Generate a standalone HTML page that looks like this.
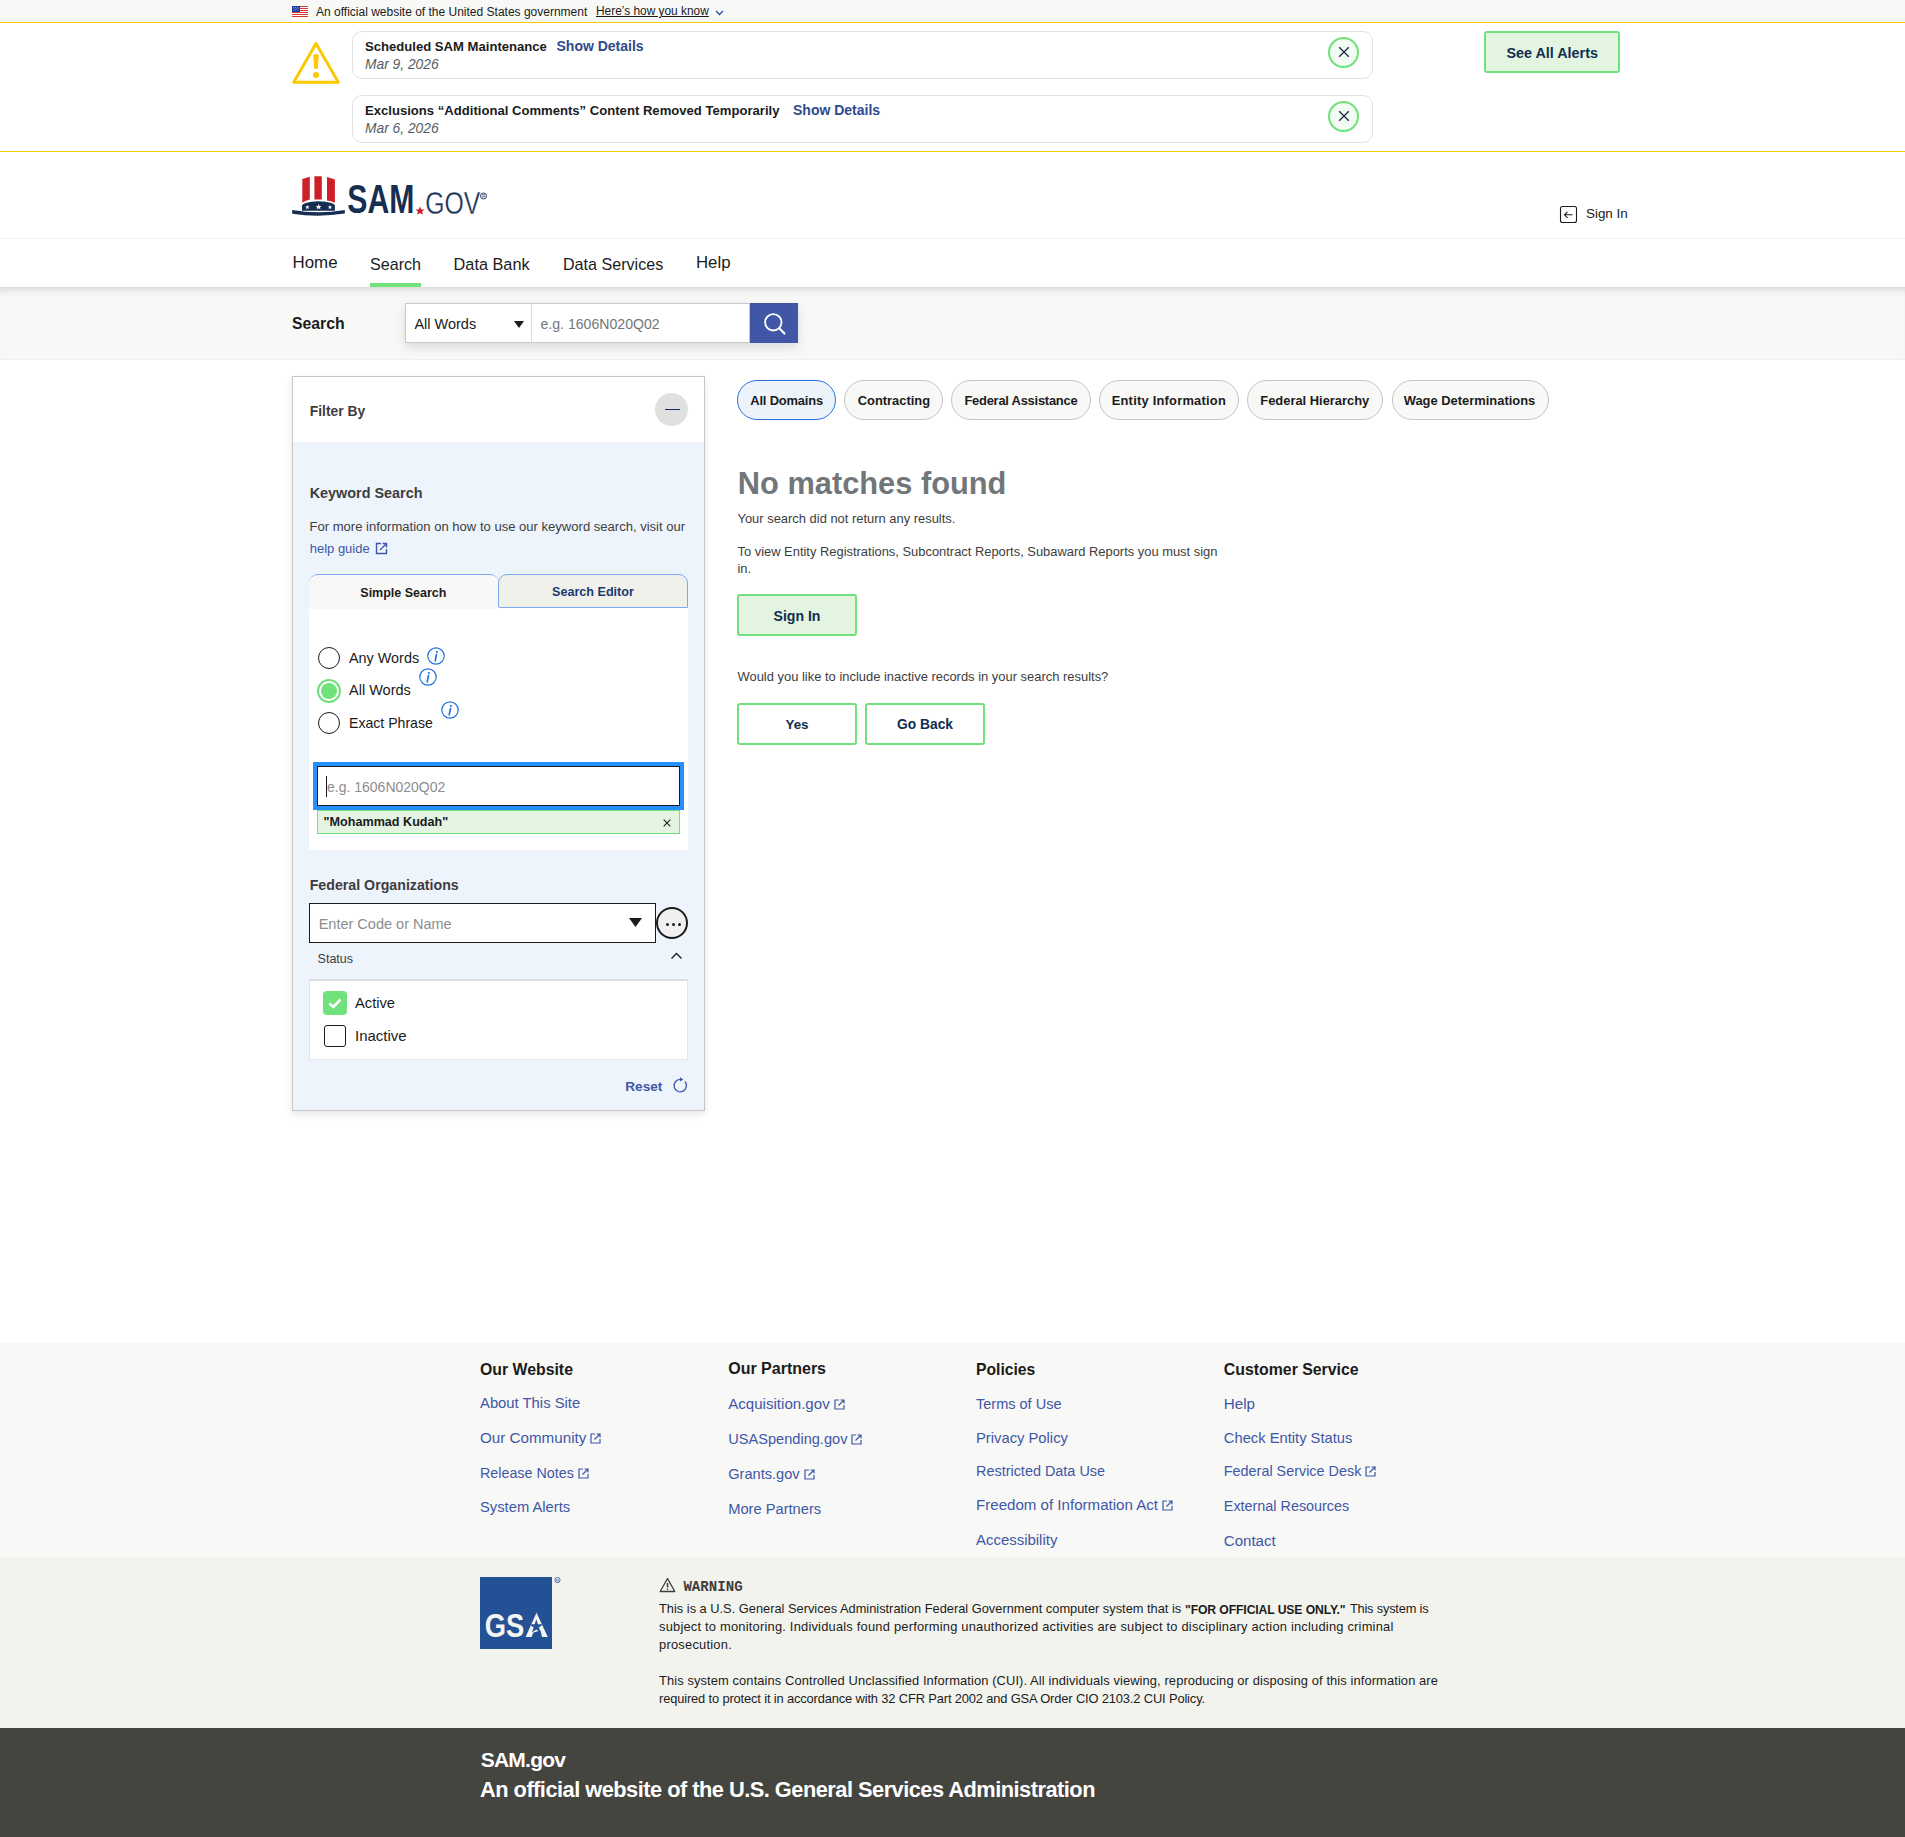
<!DOCTYPE html>
<html><head><meta charset="utf-8"><title>SAM.gov Search</title>
<style>
html,body{margin:0;padding:0;}
body{width:1905px;height:1837px;position:relative;overflow:hidden;background:#fff;font-family:'Liberation Sans', sans-serif;}
.t{position:absolute;white-space:nowrap;line-height:1;}
</style></head><body>
<div style="position:absolute;left:0px;top:0px;width:1905px;height:22px;background:#f8f8f6;"></div>
<div style="position:absolute;left:0px;top:22px;width:1905px;height:1px;background:#fcc900;"></div>
<svg style="position:absolute;left:292px;top:6px" width="16" height="11" viewBox="0 0 16 11">
<rect width="16" height="11" fill="#fff"/>
<g fill="#d83933"><rect y="0" width="16" height="1"/><rect y="2" width="16" height="1"/><rect y="4" width="16" height="1"/><rect y="6" width="16" height="1"/><rect y="8" width="16" height="1"/><rect y="10" width="16" height="1"/></g>
<rect width="8" height="6" fill="#1b3a9e"/>
<g fill="#fff"><circle cx="1.5" cy="1.2" r=".45"/><circle cx="3.5" cy="1.2" r=".45"/><circle cx="5.5" cy="1.2" r=".45"/><circle cx="2.5" cy="2.6" r=".45"/><circle cx="4.5" cy="2.6" r=".45"/><circle cx="6.5" cy="2.6" r=".45"/><circle cx="1.5" cy="4" r=".45"/><circle cx="3.5" cy="4" r=".45"/><circle cx="5.5" cy="4" r=".45"/></g>
</svg>
<div class="t " style="left:316px;top:6.34px;font-size:12.0px;font-weight:400;color:#1b1b1b;font-family:'Liberation Sans', sans-serif;">An official website of the United States government</div>
<div class="t " style="left:596px;top:6.43px;font-size:11.9px;font-weight:400;color:#1b1b1b;font-family:'Liberation Sans', sans-serif;text-decoration:underline;">Here’s how you know</div>
<svg style="position:absolute;left:714.5px;top:9.5px" width="9" height="6" viewBox="0 0 9 6"><path d="M1 1l3.5 3.5L8 1" fill="none" stroke="#2e4a9e" stroke-width="1.3"/></svg>
<div style="position:absolute;left:0px;top:151px;width:1905px;height:1px;background:#fcc900;"></div>
<svg style="position:absolute;left:292px;top:41px" width="48" height="46" viewBox="0 0 48 46">
<path d="M24 2.6 L46.3 41.3 L1.7 41.3 Z" fill="none" stroke="#fcc900" stroke-width="3" stroke-linejoin="round"/>
<path d="M21.2 14.3 Q24 11.6 26.8 14.3 L25.8 27.8 L22.2 27.8 Z" fill="#fcc900"/>
<circle cx="24" cy="33.9" r="3" fill="#fcc900"/>
</svg>
<div style="position:absolute;left:352px;top:31px;width:1021px;height:48px;box-sizing:border-box;border:1px solid #dfe1e2;border-radius:10px;background:#fff;"></div>
<div class="t " style="left:365px;top:39.91px;font-size:13.1px;font-weight:700;color:#1b1b1b;font-family:'Liberation Sans', sans-serif;">Scheduled SAM Maintenance</div>
<div class="t " style="left:556.5px;top:39.15px;font-size:14.0px;font-weight:700;color:#2e4a8c;font-family:'Liberation Sans', sans-serif;">Show Details</div>
<div class="t " style="left:365px;top:58.02px;font-size:13.8px;font-weight:400;color:#565c65;font-family:'Liberation Sans', sans-serif;font-style:italic;">Mar 9, 2026</div>
<div style="position:absolute;left:1328px;top:36.8px;width:31px;height:31px;box-sizing:border-box;border:2px solid #70e17b;border-radius:50%;background:#f3fbf2;"></div>
<svg style="position:absolute;left:1336.5px;top:44.8px" width="14" height="14" viewBox="0 0 14 14"><path d="M2.2 2.2L11.8 11.8M11.8 2.2L2.2 11.8" stroke="#1b2b4b" stroke-width="1.3"/></svg>
<div style="position:absolute;left:352px;top:95px;width:1021px;height:48px;box-sizing:border-box;border:1px solid #dfe1e2;border-radius:10px;background:#fff;"></div>
<div class="t " style="left:365px;top:103.91px;font-size:13.1px;font-weight:700;color:#1b1b1b;font-family:'Liberation Sans', sans-serif;">Exclusions “Additional Comments” Content Removed Temporarily</div>
<div class="t " style="left:793px;top:103.15px;font-size:14.0px;font-weight:700;color:#2e4a8c;font-family:'Liberation Sans', sans-serif;">Show Details</div>
<div class="t " style="left:365px;top:122.02px;font-size:13.8px;font-weight:400;color:#565c65;font-family:'Liberation Sans', sans-serif;font-style:italic;">Mar 6, 2026</div>
<div style="position:absolute;left:1328px;top:100.8px;width:31px;height:31px;box-sizing:border-box;border:2px solid #70e17b;border-radius:50%;background:#f3fbf2;"></div>
<svg style="position:absolute;left:1336.5px;top:108.8px" width="14" height="14" viewBox="0 0 14 14"><path d="M2.2 2.2L11.8 11.8M11.8 2.2L2.2 11.8" stroke="#1b2b4b" stroke-width="1.3"/></svg>
<div style="position:absolute;left:1484px;top:31px;width:136px;height:42px;box-sizing:border-box;border:2px solid #70e17b;border-radius:3px;background:#e3f5e1;"></div>
<div class="t " style="left:1506.5px;top:46.35px;font-size:14.35px;font-weight:700;color:#112e51;font-family:'Liberation Sans', sans-serif;">See All Alerts</div>
<svg style="position:absolute;left:291px;top:175px" width="197" height="43" viewBox="0 0 197 43">
<path d="M11.3 4.1 L18.8 1.8 L18.8 24.6 Q15 25.6 11.3 27.7 Z" fill="#cd2026"/>
<path d="M23.4 1.2 L30.8 1.2 L30.8 24.6 Q27.1 24.2 23.4 24.6 Z" fill="#cd2026"/>
<path d="M36 2 L43.9 4.4 L43.9 27.7 Q40 25.6 36 25.4 Z" fill="#cd2026"/>
<path d="M11 35.7 L11 30.6 Q12 27.2 27.4 26.3 Q42.9 27.2 43.9 30.6 L43.9 35.7 Z" fill="#162e51"/>
<path d="M1.2 35 Q27.4 39.6 53.8 35 L53.8 38.6 Q27.4 42.6 1.2 38.8 Z" fill="#162e51"/>
<g fill="#fff">
<polygon points="16.4,29.9 17,31.4 18.6,31.5 17.4,32.5 17.8,34.1 16.4,33.2 15,34.1 15.4,32.5 14.2,31.5 15.8,31.4"/>
<polygon points="27.6,29.1 28.4,31 30.4,31.1 28.9,32.4 29.4,34.3 27.6,33.2 25.8,34.3 26.3,32.4 24.8,31.1 26.8,31"/>
<polygon points="39,29.9 39.6,31.4 41.2,31.5 40,32.5 40.4,34.1 39,33.2 37.6,34.1 38,32.5 36.8,31.5 38.4,31.4"/>
</g>
<text x="56.3" y="38" font-family="Liberation Sans" font-weight="700" font-size="40" fill="#162e51" textLength="67" lengthAdjust="spacingAndGlyphs">SAM</text>
<polygon points="129,31.4 130.3,34.4 133.6,34.6 131.1,36.6 131.9,39.8 129,38 126.1,39.8 126.9,36.6 124.4,34.6 127.7,34.4" fill="#cd2026"/>
<text x="134.2" y="38.6" font-family="Liberation Sans" font-weight="400" font-size="32" fill="#162e51" stroke="#fff" stroke-width="0.35" paint-order="normal" textLength="55" lengthAdjust="spacingAndGlyphs">GOV</text>
<circle cx="192.5" cy="21" r="3" fill="none" stroke="#162e51" stroke-width="0.9"/>
<text x="191" y="22.8" font-family="Liberation Sans" font-size="4.5" fill="#162e51">R</text>
</svg>
<svg style="position:absolute;left:1559px;top:205px" width="19" height="19" viewBox="0 0 19 19">
<rect x="1.5" y="1.5" width="16" height="16" rx="2" fill="none" stroke="#1b1b1b" stroke-width="1.1"/>
<path d="M13.5 9.8H5.5M8.5 6.8L5.5 9.8L8.5 12.8" fill="none" stroke="#1b1b1b" stroke-width="1.1"/>
</svg>
<div class="t " style="left:1586px;top:206.66px;font-size:13.4px;font-weight:400;color:#1b1b1b;font-family:'Liberation Sans', sans-serif;">Sign In</div>
<div style="position:absolute;left:0px;top:238px;width:1905px;height:1px;background:#f0f0ec;"></div>
<div class="t " style="left:292.5px;top:255.19px;font-size:16.9px;font-weight:400;color:#1b1b1b;font-family:'Liberation Sans', sans-serif;">Home</div>
<div class="t " style="left:370px;top:255.87px;font-size:16.1px;font-weight:400;color:#1b1b1b;font-family:'Liberation Sans', sans-serif;">Search</div>
<div class="t " style="left:453.6px;top:255.70px;font-size:16.3px;font-weight:400;color:#1b1b1b;font-family:'Liberation Sans', sans-serif;">Data Bank</div>
<div class="t " style="left:563px;top:255.87px;font-size:16.1px;font-weight:400;color:#1b1b1b;font-family:'Liberation Sans', sans-serif;">Data Services</div>
<div class="t " style="left:696px;top:255.28px;font-size:16.8px;font-weight:400;color:#1b1b1b;font-family:'Liberation Sans', sans-serif;">Help</div>
<div style="position:absolute;left:370px;top:283px;width:51px;height:4px;background:#70e17b;"></div>
<div style="position:absolute;left:0px;top:287px;width:1905px;height:73px;box-sizing:border-box;border-bottom:1px solid #f0f0ee;background:#f8f8f6;box-shadow: inset 0 8px 8px -6px rgba(0,0,0,0.16);"></div>
<div class="t " style="left:292px;top:315.63px;font-size:15.8px;font-weight:700;color:#1b1b1b;font-family:'Liberation Sans', sans-serif;">Search</div>
<div style="position:absolute;left:405px;top:303px;width:393px;height:40px;box-shadow:0 4px 10px rgba(0,0,0,0.12);"></div>
<div style="position:absolute;left:405px;top:303px;width:127px;height:40px;box-sizing:border-box;border:1px solid #c9c9c9;background:#fff;"></div>
<div class="t " style="left:414.4px;top:316.73px;font-size:14.5px;font-weight:400;color:#1b1b1b;font-family:'Liberation Sans', sans-serif;">All Words</div>
<svg style="position:absolute;left:514px;top:321px" width="10" height="7" viewBox="0 0 10 7"><path d="M0 0H10L5 7Z" fill="#1b1b1b"/></svg>
<div style="position:absolute;left:531px;top:303px;width:219px;height:40px;box-sizing:border-box;border:1px solid #c9c9c9;border-left:1px solid #dcdcdc;background:#fff;"></div>
<div class="t " style="left:540.5px;top:317.06px;font-size:14.1px;font-weight:400;color:#71767a;font-family:'Liberation Sans', sans-serif;">e.g. 1606N020Q02</div>
<div style="position:absolute;left:750px;top:303px;width:48px;height:40px;background:#3f57a6;"></div>
<svg style="position:absolute;left:762.7px;top:311.7px" width="24" height="24" viewBox="0 0 24 24"><circle cx="10.3" cy="10.3" r="8.2" fill="none" stroke="#fff" stroke-width="1.8"/><path d="M16.2 16.2L21.5 21.5" stroke="#fff" stroke-width="2.2" stroke-linecap="round"/></svg>
<div style="position:absolute;left:292px;top:376px;width:413px;height:735px;box-sizing:border-box;border:1px solid #c6c6c6;background:#edf4fc;box-shadow:0 3px 8px rgba(0,0,0,0.10);"></div>
<div style="position:absolute;left:293px;top:377px;width:411px;height:65px;background:#fff;"></div>
<div class="t " style="left:309.8px;top:405.28px;font-size:13.85px;font-weight:700;color:#3d3d3d;font-family:'Liberation Sans', sans-serif;">Filter By</div>
<div style="position:absolute;left:655px;top:393px;width:33px;height:33px;border-radius:50%;background:#e0e0e0;"></div>
<div style="position:absolute;left:665px;top:408.8px;width:14.5px;height:1.6px;background:#112e51;border-radius:1px;"></div>
<div class="t " style="left:309.7px;top:485.51px;font-size:14.4px;font-weight:700;color:#3d3d3d;font-family:'Liberation Sans', sans-serif;">Keyword Search</div>
<div class="t " style="left:309.5px;top:519.55px;font-size:13.05px;font-weight:400;color:#3d3d3d;font-family:'Liberation Sans', sans-serif;">For more information on how to use our keyword search, visit our</div>
<div class="t " style="left:309.7px;top:542.00px;font-size:13.0px;font-weight:400;color:#3f57a6;font-family:'Liberation Sans', sans-serif;">help guide</div>
<svg style="position:absolute;left:375px;top:542px" width="13" height="13" viewBox="0 0 13 13"><path d="M6 1.5H1.5V11.5H11.5V7" fill="none" stroke="#3f57a6" stroke-width="1.4"/><path d="M5 8L11.5 1.5M7.5 1.5H11.5V5.5" fill="none" stroke="#3f57a6" stroke-width="1.4"/></svg>
<div style="position:absolute;left:309px;top:574px;width:190px;height:34px;box-sizing:border-box;border-top:1px solid #7aaaf0;border-radius:9px 9px 0 0;background:#f8f8f6;"></div>
<div style="position:absolute;left:498px;top:574px;width:190px;height:34px;box-sizing:border-box;border:1px solid #7aaaf0;border-radius:9px 9px 0 0;background:#f1f1ec;"></div>
<div class="t " style="left:360.3px;top:587.22px;font-size:12.5px;font-weight:700;color:#1b1b1b;font-family:'Liberation Sans', sans-serif;">Simple Search</div>
<div class="t " style="left:552px;top:586.33px;font-size:12.6px;font-weight:700;color:#1a3a70;font-family:'Liberation Sans', sans-serif;">Search Editor</div>
<div style="position:absolute;left:309px;top:608px;width:379px;height:242px;background:#fff;"></div>
<div style="position:absolute;left:309px;top:607px;width:190px;height:2px;background:#f8f8f6;"></div>
<div style="position:absolute;left:318px;top:647px;width:22px;height:22px;box-sizing:border-box;border:1.3px solid #1b1b1b;border-radius:50%;"></div>
<div style="position:absolute;left:317px;top:679px;width:24px;height:24px;box-sizing:border-box;border:2px solid #70e17b;border-radius:50%;"></div>
<div style="position:absolute;left:321px;top:683px;width:16px;height:16px;border-radius:50%;background:#70e17b;"></div>
<div style="position:absolute;left:318px;top:712px;width:22px;height:22px;box-sizing:border-box;border:1.3px solid #1b1b1b;border-radius:50%;"></div>
<div class="t " style="left:349px;top:650.51px;font-size:14.4px;font-weight:400;color:#1b1b1b;font-family:'Liberation Sans', sans-serif;">Any Words</div>
<div class="t " style="left:349px;top:683.23px;font-size:14.5px;font-weight:400;color:#1b1b1b;font-family:'Liberation Sans', sans-serif;">All Words</div>
<div class="t " style="left:349px;top:716.46px;font-size:14.1px;font-weight:400;color:#1b1b1b;font-family:'Liberation Sans', sans-serif;">Exact Phrase</div>
<svg style="position:absolute;left:427px;top:646.8px" width="18" height="18" viewBox="0 0 18 18"><circle cx="9" cy="9" r="8.2" fill="none" stroke="#2672de" stroke-width="1.2"/><circle cx="9.9" cy="5" r="1.1" fill="#2672de"/><path d="M9.5 7.5L8.2 13.8" stroke="#2672de" stroke-width="1.7" stroke-linecap="round"/></svg>
<svg style="position:absolute;left:418.8px;top:667.8px" width="18" height="18" viewBox="0 0 18 18"><circle cx="9" cy="9" r="8.2" fill="none" stroke="#2672de" stroke-width="1.2"/><circle cx="9.9" cy="5" r="1.1" fill="#2672de"/><path d="M9.5 7.5L8.2 13.8" stroke="#2672de" stroke-width="1.7" stroke-linecap="round"/></svg>
<svg style="position:absolute;left:440.8px;top:700.8px" width="18" height="18" viewBox="0 0 18 18"><circle cx="9" cy="9" r="8.2" fill="none" stroke="#2672de" stroke-width="1.2"/><circle cx="9.9" cy="5" r="1.1" fill="#2672de"/><path d="M9.5 7.5L8.2 13.8" stroke="#2672de" stroke-width="1.7" stroke-linecap="round"/></svg>
<div style="position:absolute;left:313px;top:762px;width:371px;height:48px;background:#2491ff;"></div>
<div style="position:absolute;left:317px;top:766px;width:363px;height:40px;box-sizing:border-box;border:1.5px solid #1b1b1b;background:#fff;"></div>
<div style="position:absolute;left:326px;top:776px;width:1px;height:21px;background:#1b1b1b;"></div>
<div class="t " style="left:327px;top:780.15px;font-size:14.0px;font-weight:400;color:#8d8d8d;font-family:'Liberation Sans', sans-serif;">e.g. 1606N020Q02</div>
<div style="position:absolute;left:317px;top:810px;width:363px;height:24px;box-sizing:border-box;border:1px solid #70e17b;background:#e3f5e1;"></div>
<div class="t " style="left:323.6px;top:815.93px;font-size:12.6px;font-weight:700;color:#1b1b1b;font-family:'Liberation Sans', sans-serif;">"Mohammad Kudah"</div>
<svg style="position:absolute;left:662px;top:818px" width="10" height="10" viewBox="0 0 10 10"><path d="M1.7 1.7L8.3 8.3M8.3 1.7L1.7 8.3" stroke="#1b1b1b" stroke-width="1.1"/></svg>
<div class="t " style="left:309.7px;top:877.98px;font-size:14.2px;font-weight:700;color:#3d3d3d;font-family:'Liberation Sans', sans-serif;">Federal Organizations</div>
<div style="position:absolute;left:309px;top:903px;width:347px;height:40px;box-sizing:border-box;border:1.5px solid #1b1b1b;background:#fff;"></div>
<div class="t " style="left:318.7px;top:916.73px;font-size:14.5px;font-weight:400;color:#8d8d8d;font-family:'Liberation Sans', sans-serif;">Enter Code or Name</div>
<svg style="position:absolute;left:629px;top:918px" width="13" height="9" viewBox="0 0 13 9"><path d="M0 0H13L6.5 9Z" fill="#1b1b1b"/></svg>
<div style="position:absolute;left:656px;top:907px;width:32px;height:32px;box-sizing:border-box;border:2px solid #1b1b1b;border-radius:50%;background:#f0f0f0;"></div>
<div style="position:absolute;left:665.6px;top:922.6px;width:3.2px;height:3.2px;border-radius:50%;background:#1b1b1b;"></div>
<div style="position:absolute;left:671.6px;top:922.6px;width:3.2px;height:3.2px;border-radius:50%;background:#1b1b1b;"></div>
<div style="position:absolute;left:677.6px;top:922.6px;width:3.2px;height:3.2px;border-radius:50%;background:#1b1b1b;"></div>
<div class="t " style="left:317.6px;top:953.12px;font-size:12.5px;font-weight:400;color:#3d3d3d;font-family:'Liberation Sans', sans-serif;">Status</div>
<svg style="position:absolute;left:670px;top:951px" width="13" height="9" viewBox="0 0 13 9"><path d="M1.5 7.5L6.5 2.5L11.5 7.5" fill="none" stroke="#1b1b1b" stroke-width="1.3"/></svg>
<div style="position:absolute;left:309px;top:979px;width:379px;height:81px;box-sizing:border-box;border:1px solid #e3e5e6;border-top:2px solid #dcdee0;background:#fff;"></div>
<div style="position:absolute;left:323px;top:991px;width:24px;height:24px;border-radius:4px;background:#70e17b;"></div>
<svg style="position:absolute;left:323px;top:991px" width="24" height="24" viewBox="0 0 24 24"><path d="M6.5 12.5L10.3 16L17.5 8.5" fill="none" stroke="#fff" stroke-width="2.6"/></svg>
<div style="position:absolute;left:324px;top:1025px;width:22px;height:22px;box-sizing:border-box;border:1.5px solid #1b1b1b;border-radius:3px;background:#fff;"></div>
<div class="t " style="left:355px;top:995.96px;font-size:14.7px;font-weight:400;color:#1b1b1b;font-family:'Liberation Sans', sans-serif;">Active</div>
<div class="t " style="left:355px;top:1027.70px;font-size:15.0px;font-weight:400;color:#1b1b1b;font-family:'Liberation Sans', sans-serif;">Inactive</div>
<div class="t " style="left:625.3px;top:1079.69px;font-size:13.6px;font-weight:700;color:#3f57a6;font-family:'Liberation Sans', sans-serif;">Reset</div>
<svg style="position:absolute;left:671.5px;top:1076.5px" width="17" height="17" viewBox="0 0 17 17"><path d="M8.3 2.4A6.2 6.2 0 1 0 12.9 4.5" fill="none" stroke="#3f57a6" stroke-width="1.3"/><path d="M8 0.2L11.3 2.4L8 4.6Z" fill="#3f57a6"/></svg>
<div style="position:absolute;left:737px;top:380px;width:99px;height:40px;box-sizing:border-box;border-radius:20px;border:1px solid #2672de;background:#edf3fb;"></div>
<div class="t " style="left:750.3px;top:394.58px;font-size:12.9px;font-weight:700;color:#1b1b1b;font-family:'Liberation Sans', sans-serif;letter-spacing:-0.168px;">All Domains</div>
<div style="position:absolute;left:844px;top:380px;width:99px;height:40px;box-sizing:border-box;border-radius:20px;border:1px solid #c6c6c6;background:#f8f8f6;"></div>
<div class="t " style="left:857.7px;top:394.58px;font-size:12.9px;font-weight:700;color:#1b1b1b;font-family:'Liberation Sans', sans-serif;letter-spacing:0.011px;">Contracting</div>
<div style="position:absolute;left:951px;top:380px;width:139.5px;height:40px;box-sizing:border-box;border-radius:20px;border:1px solid #c6c6c6;background:#f8f8f6;"></div>
<div class="t " style="left:964.4px;top:394.58px;font-size:12.9px;font-weight:700;color:#1b1b1b;font-family:'Liberation Sans', sans-serif;letter-spacing:-0.223px;">Federal Assistance</div>
<div style="position:absolute;left:1099px;top:380px;width:139.5px;height:40px;box-sizing:border-box;border-radius:20px;border:1px solid #c6c6c6;background:#f8f8f6;"></div>
<div class="t " style="left:1111.7px;top:394.58px;font-size:12.9px;font-weight:700;color:#1b1b1b;font-family:'Liberation Sans', sans-serif;letter-spacing:0.225px;">Entity Information</div>
<div style="position:absolute;left:1247px;top:380px;width:135.5px;height:40px;box-sizing:border-box;border-radius:20px;border:1px solid #c6c6c6;background:#f8f8f6;"></div>
<div class="t " style="left:1260.3px;top:394.58px;font-size:12.9px;font-weight:700;color:#1b1b1b;font-family:'Liberation Sans', sans-serif;letter-spacing:0.001px;">Federal Hierarchy</div>
<div style="position:absolute;left:1391.5px;top:380px;width:157.0px;height:40px;box-sizing:border-box;border-radius:20px;border:1px solid #c6c6c6;background:#f8f8f6;"></div>
<div class="t " style="left:1403.7px;top:394.58px;font-size:12.9px;font-weight:700;color:#1b1b1b;font-family:'Liberation Sans', sans-serif;letter-spacing:0.015px;">Wage Determinations</div>
<div class="t " style="left:737.8px;top:468.93px;font-size:30.8px;font-weight:700;color:#71767a;font-family:'Liberation Sans', sans-serif;">No matches found</div>
<div class="t " style="left:737.5px;top:513.05px;font-size:12.93px;font-weight:400;color:#3d3d3d;font-family:'Liberation Sans', sans-serif;">Your search did not return any results.</div>
<div class="t " style="left:737.5px;top:545.57px;font-size:12.91px;font-weight:400;color:#3d3d3d;font-family:'Liberation Sans', sans-serif;">To view Entity Registrations, Subcontract Reports, Subaward Reports you must sign</div>
<div class="t " style="left:737.5px;top:563.07px;font-size:12.91px;font-weight:400;color:#3d3d3d;font-family:'Liberation Sans', sans-serif;">in.</div>
<div style="position:absolute;left:737px;top:594px;width:120px;height:42px;box-sizing:border-box;border:2px solid #70e17b;border-radius:3px;background:#e3f5e1;"></div>
<div class="t " style="left:737px;top:609.06px;font-size:14.1px;font-weight:700;color:#112e51;font-family:'Liberation Sans', sans-serif;width:120px;text-align:center;">Sign In</div>
<div class="t " style="left:737.5px;top:670.65px;font-size:12.94px;font-weight:400;color:#3d3d3d;font-family:'Liberation Sans', sans-serif;">Would you like to include inactive records in your search results?</div>
<div style="position:absolute;left:737px;top:703px;width:120px;height:42px;box-sizing:border-box;border:2px solid #70e17b;border-radius:3px;background:#fff;"></div>
<div style="position:absolute;left:865px;top:703px;width:120px;height:42px;box-sizing:border-box;border:2px solid #70e17b;border-radius:3px;background:#fff;"></div>
<div class="t " style="left:737px;top:718.26px;font-size:13.4px;font-weight:700;color:#112e51;font-family:'Liberation Sans', sans-serif;width:120px;text-align:center;">Yes</div>
<div class="t " style="left:865px;top:717.92px;font-size:13.8px;font-weight:700;color:#112e51;font-family:'Liberation Sans', sans-serif;width:120px;text-align:center;">Go Back</div>
<div style="position:absolute;left:0px;top:1343px;width:1905px;height:214px;background:#f8f8f6;"></div>
<div class="t " style="left:480px;top:1361.59px;font-size:15.84px;font-weight:700;color:#1b1b1b;font-family:'Liberation Sans', sans-serif;">Our Website</div>
<div class="t " style="left:480px;top:1396.15px;font-size:14.82px;font-weight:400;color:#3f57a6;font-family:'Liberation Sans', sans-serif;">About This Site</div>
<div class="t " style="left:480px;top:1429.93px;font-size:15.2px;font-weight:400;color:#3f57a6;font-family:'Liberation Sans', sans-serif;">Our Community<svg style="display:inline-block;vertical-align:-1px;margin-left:4px" width="11" height="11" viewBox="0 0 11 11"><path d="M5 1H1V10H10V6" fill="none" stroke="#3f57a6" stroke-width="1.2"/><path d="M4.5 6.5L10 1M6.5 1H10V4.5" fill="none" stroke="#3f57a6" stroke-width="1.2"/></svg></div>
<div class="t " style="left:480px;top:1465.50px;font-size:14.3px;font-weight:400;color:#3f57a6;font-family:'Liberation Sans', sans-serif;">Release Notes<svg style="display:inline-block;vertical-align:-1px;margin-left:4px" width="11" height="11" viewBox="0 0 11 11"><path d="M5 1H1V10H10V6" fill="none" stroke="#3f57a6" stroke-width="1.2"/><path d="M4.5 6.5L10 1M6.5 1H10V4.5" fill="none" stroke="#3f57a6" stroke-width="1.2"/></svg></div>
<div class="t " style="left:480px;top:1499.91px;font-size:14.76px;font-weight:400;color:#3f57a6;font-family:'Liberation Sans', sans-serif;">System Alerts</div>
<div class="t " style="left:728.2px;top:1361.46px;font-size:16.0px;font-weight:700;color:#1b1b1b;font-family:'Liberation Sans', sans-serif;">Our Partners</div>
<div class="t " style="left:728.2px;top:1396.22px;font-size:15.1px;font-weight:400;color:#3f57a6;font-family:'Liberation Sans', sans-serif;">Acquisition.gov<svg style="display:inline-block;vertical-align:-1px;margin-left:4px" width="11" height="11" viewBox="0 0 11 11"><path d="M5 1H1V10H10V6" fill="none" stroke="#3f57a6" stroke-width="1.2"/><path d="M4.5 6.5L10 1M6.5 1H10V4.5" fill="none" stroke="#3f57a6" stroke-width="1.2"/></svg></div>
<div class="t " style="left:728.2px;top:1431.64px;font-size:14.6px;font-weight:400;color:#3f57a6;font-family:'Liberation Sans', sans-serif;">USASpending.gov<svg style="display:inline-block;vertical-align:-1px;margin-left:4px" width="11" height="11" viewBox="0 0 11 11"><path d="M5 1H1V10H10V6" fill="none" stroke="#3f57a6" stroke-width="1.2"/><path d="M4.5 6.5L10 1M6.5 1H10V4.5" fill="none" stroke="#3f57a6" stroke-width="1.2"/></svg></div>
<div class="t " style="left:728.2px;top:1466.64px;font-size:14.6px;font-weight:400;color:#3f57a6;font-family:'Liberation Sans', sans-serif;">Grants.gov<svg style="display:inline-block;vertical-align:-1px;margin-left:4px" width="11" height="11" viewBox="0 0 11 11"><path d="M5 1H1V10H10V6" fill="none" stroke="#3f57a6" stroke-width="1.2"/><path d="M4.5 6.5L10 1M6.5 1H10V4.5" fill="none" stroke="#3f57a6" stroke-width="1.2"/></svg></div>
<div class="t " style="left:728.2px;top:1501.57px;font-size:14.68px;font-weight:400;color:#3f57a6;font-family:'Liberation Sans', sans-serif;">More Partners</div>
<div class="t " style="left:976px;top:1361.71px;font-size:15.7px;font-weight:700;color:#1b1b1b;font-family:'Liberation Sans', sans-serif;">Policies</div>
<div class="t " style="left:976px;top:1396.70px;font-size:14.53px;font-weight:400;color:#3f57a6;font-family:'Liberation Sans', sans-serif;">Terms of Use</div>
<div class="t " style="left:976px;top:1430.50px;font-size:14.77px;font-weight:400;color:#3f57a6;font-family:'Liberation Sans', sans-serif;">Privacy Policy</div>
<div class="t " style="left:976px;top:1464.29px;font-size:14.43px;font-weight:400;color:#3f57a6;font-family:'Liberation Sans', sans-serif;">Restricted Data Use</div>
<div class="t " style="left:976px;top:1497.02px;font-size:15.1px;font-weight:400;color:#3f57a6;font-family:'Liberation Sans', sans-serif;">Freedom of Information Act<svg style="display:inline-block;vertical-align:-1px;margin-left:4px" width="11" height="11" viewBox="0 0 11 11"><path d="M5 1H1V10H10V6" fill="none" stroke="#3f57a6" stroke-width="1.2"/><path d="M4.5 6.5L10 1M6.5 1H10V4.5" fill="none" stroke="#3f57a6" stroke-width="1.2"/></svg></div>
<div class="t " style="left:976px;top:1532.84px;font-size:14.95px;font-weight:400;color:#3f57a6;font-family:'Liberation Sans', sans-serif;">Accessibility</div>
<div class="t " style="left:1223.8px;top:1361.57px;font-size:15.86px;font-weight:700;color:#1b1b1b;font-family:'Liberation Sans', sans-serif;">Customer Service</div>
<div class="t " style="left:1223.8px;top:1396.13px;font-size:15.2px;font-weight:400;color:#3f57a6;font-family:'Liberation Sans', sans-serif;">Help</div>
<div class="t " style="left:1223.8px;top:1430.52px;font-size:14.74px;font-weight:400;color:#3f57a6;font-family:'Liberation Sans', sans-serif;">Check Entity Status</div>
<div class="t " style="left:1223.8px;top:1464.31px;font-size:14.4px;font-weight:400;color:#3f57a6;font-family:'Liberation Sans', sans-serif;">Federal Service Desk<svg style="display:inline-block;vertical-align:-1px;margin-left:4px" width="11" height="11" viewBox="0 0 11 11"><path d="M5 1H1V10H10V6" fill="none" stroke="#3f57a6" stroke-width="1.2"/><path d="M4.5 6.5L10 1M6.5 1H10V4.5" fill="none" stroke="#3f57a6" stroke-width="1.2"/></svg></div>
<div class="t " style="left:1223.8px;top:1499.33px;font-size:14.38px;font-weight:400;color:#3f57a6;font-family:'Liberation Sans', sans-serif;">External Resources</div>
<div class="t " style="left:1223.8px;top:1532.75px;font-size:15.06px;font-weight:400;color:#3f57a6;font-family:'Liberation Sans', sans-serif;">Contact</div>
<div style="position:absolute;left:0px;top:1557px;width:1905px;height:171px;background:#f3f3ee;"></div>
<svg style="position:absolute;left:480px;top:1577px" width="82" height="73" viewBox="0 0 82 73">
<rect x="0" y="0" width="72" height="72" fill="#245196"/>
<text x="4.8" y="60.3" font-family="Liberation Sans" font-weight="700" font-size="34" fill="#f4f4f0" textLength="39.5" lengthAdjust="spacingAndGlyphs">GS</text>
<polygon points="56.5,35.8 45.6,60 67.8,60" fill="#f4f4f0"/>
<polygon points="56.3,42.3 57.9,47.3 63.2,47.3 58.9,50.5 60.6,55.5 56.3,52.4 52,55.5 53.7,50.5 49.4,47.3 54.7,47.3" fill="#245196"/>
<polygon points="51.5,60 53.5,55.5 60.5,53.5 62,60" fill="#245196"/>
<circle cx="77.5" cy="3" r="2.6" fill="none" stroke="#245196" stroke-width="0.8"/><text x="76.1" y="4.6" font-family="Liberation Sans" font-size="4" fill="#245196">R</text>
</svg>
<svg style="position:absolute;left:659px;top:1577px" width="17" height="16" viewBox="0 0 17 16"><path d="M8.5 1.5L15.8 14.5H1.2Z" fill="none" stroke="#3d3d3d" stroke-width="1.3" stroke-linejoin="round"/><path d="M8.5 6V10.5" stroke="#3d3d3d" stroke-width="1.5"/><circle cx="8.5" cy="12.3" r=".8" fill="#3d3d3d"/></svg>
<div class="t " style="left:683.4px;top:1580.39px;font-size:14.1px;font-weight:700;color:#3d3d3d;font-family:'Liberation Mono', monospace;">WARNING</div>
<div class="t " style="left:659px;top:1603.16px;font-size:12.8px;font-weight:400;color:#1b1b1b;font-family:'Liberation Sans', sans-serif;letter-spacing:0.010px;">This is a U.S. General Services Administration Federal Government computer system that is</div>
<div class="t " style="left:1185px;top:1603.67px;font-size:12.2px;font-weight:700;color:#1b1b1b;font-family:'Liberation Sans', sans-serif;letter-spacing:-0.113px;">"FOR OFFICIAL USE ONLY."</div>
<div class="t " style="left:1349.9px;top:1603.16px;font-size:12.8px;font-weight:400;color:#1b1b1b;font-family:'Liberation Sans', sans-serif;letter-spacing:-0.184px;">This system is</div>
<div class="t " style="left:659px;top:1621.08px;font-size:12.9px;font-weight:400;color:#1b1b1b;font-family:'Liberation Sans', sans-serif;letter-spacing:0.206px;">subject to monitoring. Individuals found performing unauthorized activities are subject to disciplinary action including criminal</div>
<div class="t " style="left:659px;top:1639.08px;font-size:12.9px;font-weight:400;color:#1b1b1b;font-family:'Liberation Sans', sans-serif;letter-spacing:0.227px;">prosecution.</div>
<div class="t " style="left:659px;top:1675.08px;font-size:12.9px;font-weight:400;color:#1b1b1b;font-family:'Liberation Sans', sans-serif;letter-spacing:0.101px;">This system contains Controlled Unclassified Information (CUI). All individuals viewing, reproducing or disposing of this information are</div>
<div class="t " style="left:659px;top:1692.68px;font-size:12.9px;font-weight:400;color:#1b1b1b;font-family:'Liberation Sans', sans-serif;letter-spacing:-0.149px;">required to protect it in accordance with 32 CFR Part 2002 and GSA Order CIO 2103.2 CUI Policy.</div>
<div style="position:absolute;left:0px;top:1728px;width:1905px;height:109px;background:#454540;"></div>
<div class="t " style="left:480.7px;top:1749.22px;font-size:21.0px;font-weight:700;color:#fff;font-family:'Liberation Sans', sans-serif;letter-spacing:-0.747px;">SAM.gov</div>
<div class="t " style="left:480px;top:1779.15px;font-size:21.8px;font-weight:700;color:#fff;font-family:'Liberation Sans', sans-serif;letter-spacing:-0.512px;">An official website of the U.S. General Services Administration</div>
</body></html>
